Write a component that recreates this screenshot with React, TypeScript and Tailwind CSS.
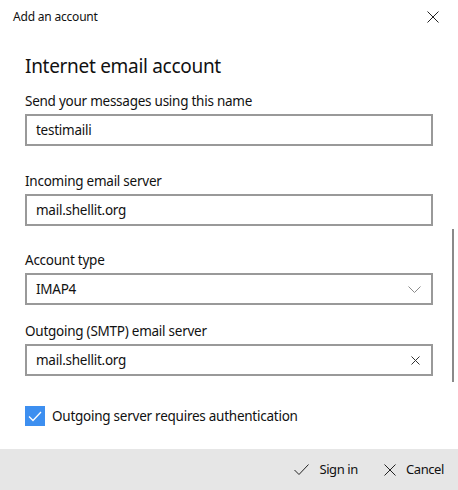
import React from "react";

const font = { fontFamily: '"Noto Sans", "Segoe UI", sans-serif' };

function Field({
  label,
  value,
  trailing,
  className = "",
}: {
  label: string;
  value: string;
  trailing?: React.ReactNode;
  className?: string;
}) {
  return (
    <div className={"flex flex-col " + className}>
      <div className="h-[20px] leading-[20px] text-[13.5px] tracking-[-0.25px] text-[#111]">{label}</div>
      <div className="mt-[3px] flex h-[32px] w-[408px] items-center border-2 border-[#999] bg-white pl-[9px] pr-[10px]">
        <span className="flex-1 text-[13.5px] tracking-[-0.25px] text-[#111]">{value}</span>
        {trailing}
      </div>
    </div>
  );
}

export default function App() {
  return (
    <div className="relative flex h-[490px] w-[458px] flex-col overflow-hidden bg-white" style={font}>
      {/* title bar */}
      <div className="flex h-[34px] items-center justify-between pl-[13px] pr-[19px]">
        <span className="text-[12px] tracking-[-0.2px] text-[#111]">Add an account</span>
        <svg width="12" height="12" viewBox="0 0 12 12" className="text-[#222]">
          <path d="M0.5 0.5 L11.5 11.5 M11.5 0.5 L0.5 11.5" stroke="currentColor" strokeWidth="1" fill="none" />
        </svg>
      </div>

      {/* form */}
      <div className="flex flex-1 flex-col pl-[25px]">
        <h1 className="mt-[18px] h-[28px] leading-[28px] text-[19px] tracking-[-0.3px] text-[#111]">Internet email account</h1>
        <Field className="mt-[11px]" label="Send your messages using this name" value="testimaili" />
        <Field className="mt-[25px]" label="Incoming email server" value="mail.shellit.org" />
        <Field
          className="mt-[24px]"
          label="Account type"
          value="IMAP4"
          trailing={
            <svg width="13" height="7" viewBox="0 0 13 7" className="text-[#8a8a8a]">
              <path d="M0.5 0.5 L6.5 6.5 L12.5 0.5" stroke="currentColor" strokeWidth="1" fill="none" />
            </svg>
          }
        />
        <Field
          className="mt-[16px]"
          label="Outgoing (SMTP) email server"
          value="mail.shellit.org"
          trailing={
            <svg width="9" height="9" viewBox="0 0 9 9" className="mr-[1px] text-[#333]">
              <path d="M0.5 0.5 L8.5 8.5 M8.5 0.5 L0.5 8.5" stroke="currentColor" strokeWidth="1" fill="none" />
            </svg>
          }
        />
        <label className="mt-[30px] flex items-center gap-[7px]">
          <span className="flex h-[20px] w-[20px] items-center justify-center bg-[#3d8ff0]">
            <svg width="14" height="11" viewBox="0 0 14 11">
              <path d="M1 5.5 L5 9.5 L13 1" stroke="white" strokeWidth="1.3" fill="none" />
            </svg>
          </span>
          <span className="text-[13.5px] tracking-[-0.25px] text-[#111]">Outgoing server requires authentication</span>
        </label>
      </div>

      {/* scrollbar */}
      <div className="absolute left-[452px] top-[229px] h-[153px] w-[2px] bg-[#8a8a8a]" />

      {/* footer */}
      <div className="flex h-[41px] items-center justify-end gap-[26px] bg-[#e6e6e6] pr-[14px]">
        <div className="flex items-center gap-[10px]">
          <svg width="15" height="11" viewBox="0 0 15 11" className="text-[#222]">
            <path d="M0.5 6 L5 10.5 L14.5 0.5" stroke="currentColor" strokeWidth="1" fill="none" />
          </svg>
          <span className="text-[13px] tracking-[-0.4px] text-[#111]">Sign in</span>
        </div>
        <div className="flex items-center gap-[10px]">
          <svg width="12" height="12" viewBox="0 0 12 12" className="text-[#222]">
            <path d="M0.5 0.5 L11.5 11.5 M11.5 0.5 L0.5 11.5" stroke="currentColor" strokeWidth="1" fill="none" />
          </svg>
          <span className="text-[13px] tracking-[-0.4px] text-[#111]">Cancel</span>
        </div>
      </div>
    </div>
  );
}
